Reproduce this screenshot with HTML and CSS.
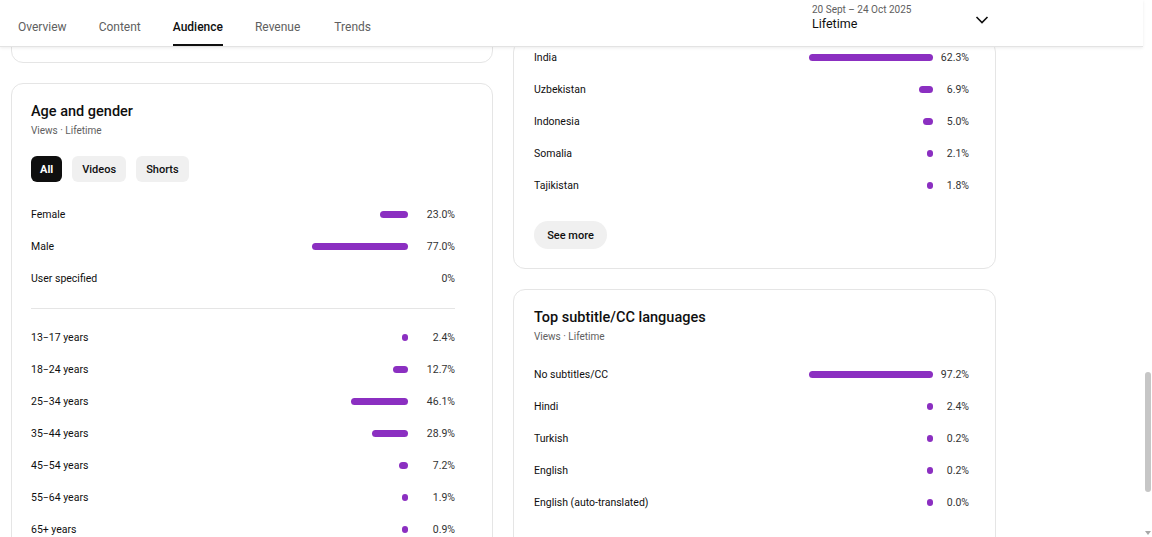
FILE: index.html
```html
<!DOCTYPE html>
<html lang="en">
<head>
<meta charset="utf-8">
<title>Audience</title>
<link rel="stylesheet" href="styles.css">
</head>
<body>
<div class="app">
  <div class="main">
    <header class="topbar">
      <nav class="tabs">
        <a class="tab">Overview</a>
        <a class="tab">Content</a>
        <a class="tab active">Audience</a>
        <a class="tab">Revenue</a>
        <a class="tab">Trends</a>
      </nav>
      <div class="picker">
        <div class="picker-text">
          <div class="picker-range">20 Sept – 24 Oct 2025</div>
          <div class="picker-value">Lifetime</div>
        </div>
        <svg class="chevron" width="14" height="10" viewBox="0 0 14 10"><path d="M1.5 2 L7 7.5 L12.5 2" fill="none" stroke="#0f0f0f" stroke-width="1.6"/></svg>
      </div>
    </header>
    <div class="content">
      <div class="col col-left">
        <section class="card card-stub"></section>
        <section class="card card-age">
          <h2 class="card-title">Age and gender</h2>
          <div class="card-sub">Views · Lifetime</div>
          <div class="chips">
            <span class="chip selected">All</span>
            <span class="chip">Videos</span>
            <span class="chip">Shorts</span>
          </div>
          <div class="rows rows-gender">
            <div class="row"><span class="label">Female</span><span class="bar-wrap"><span class="bar" style="width:28px"></span></span><span class="pct">23.0%</span></div>
            <div class="row"><span class="label">Male</span><span class="bar-wrap"><span class="bar" style="width:96px"></span></span><span class="pct">77.0%</span></div>
            <div class="row"><span class="label">User specified</span><span class="bar-wrap"></span><span class="pct">0%</span></div>
          </div>
          <hr class="divider">
          <div class="rows rows-age">
            <div class="row"><span class="label">13−17 years</span><span class="bar-wrap"><span class="bar" style="width:6px"></span></span><span class="pct">2.4%</span></div>
            <div class="row"><span class="label">18−24 years</span><span class="bar-wrap"><span class="bar" style="width:15px"></span></span><span class="pct">12.7%</span></div>
            <div class="row"><span class="label">25−34 years</span><span class="bar-wrap"><span class="bar" style="width:57px"></span></span><span class="pct">46.1%</span></div>
            <div class="row"><span class="label">35−44 years</span><span class="bar-wrap"><span class="bar" style="width:36px"></span></span><span class="pct">28.9%</span></div>
            <div class="row"><span class="label">45−54 years</span><span class="bar-wrap"><span class="bar" style="width:9px"></span></span><span class="pct">7.2%</span></div>
            <div class="row"><span class="label">55−64 years</span><span class="bar-wrap"><span class="bar" style="width:6px"></span></span><span class="pct">1.9%</span></div>
            <div class="row"><span class="label">65+ years</span><span class="bar-wrap"><span class="bar" style="width:6px"></span></span><span class="pct">0.9%</span></div>
          </div>
        </section>
      </div>
      <div class="col col-right">
        <section class="card card-geo">
          <div class="rows wide">
            <div class="row"><span class="label">India</span><span class="bar-wrap"><span class="bar" style="width:124px"></span></span><span class="pct">62.3%</span></div>
            <div class="row"><span class="label">Uzbekistan</span><span class="bar-wrap"><span class="bar" style="width:14px"></span></span><span class="pct">6.9%</span></div>
            <div class="row"><span class="label">Indonesia</span><span class="bar-wrap"><span class="bar" style="width:10px"></span></span><span class="pct">5.0%</span></div>
            <div class="row"><span class="label">Somalia</span><span class="bar-wrap"><span class="bar" style="width:6px"></span></span><span class="pct">2.1%</span></div>
            <div class="row"><span class="label">Tajikistan</span><span class="bar-wrap"><span class="bar" style="width:6px"></span></span><span class="pct">1.8%</span></div>
          </div>
          <button class="see-more">See more</button>
        </section>
        <section class="card card-cc">
          <h2 class="card-title">Top subtitle/CC languages</h2>
          <div class="card-sub">Views · Lifetime</div>
          <div class="rows wide rows-cc">
            <div class="row"><span class="label">No subtitles/CC</span><span class="bar-wrap"><span class="bar" style="width:124px"></span></span><span class="pct">97.2%</span></div>
            <div class="row"><span class="label">Hindi</span><span class="bar-wrap"><span class="bar" style="width:6px"></span></span><span class="pct">2.4%</span></div>
            <div class="row"><span class="label">Turkish</span><span class="bar-wrap"><span class="bar" style="width:6px"></span></span><span class="pct">0.2%</span></div>
            <div class="row"><span class="label">English</span><span class="bar-wrap"><span class="bar" style="width:6px"></span></span><span class="pct">0.2%</span></div>
            <div class="row"><span class="label">English (auto-translated)</span><span class="bar-wrap"><span class="bar" style="width:6px"></span></span><span class="pct">0.0%</span></div>
          </div>
        </section>
      </div>
    </div>
  </div>
  <div class="scrollbar">
    <div class="thumb"></div>
    <div class="arrow-down"></div>
  </div>
</div>
</body>
</html>
```
FILE: styles.css
```css
* { box-sizing: border-box; }
html, body { margin: 0; padding: 0; height: 100%; overflow: hidden; background: #fff; }
body { font-family: Roboto, "Liberation Sans", Arial, sans-serif; color: #0f0f0f; }

.app { display: flex; width: 1152px; height: 537px; }
.main { width: 1143px; height: 537px; display: flex; flex-direction: column; position: relative; }

.topbar {
  height: 47px; flex: none; display: flex; align-items: stretch;
  padding: 0 153px 0 18px; background: #fff;
  border-bottom: 1px solid #e3e3e3;
  box-shadow: 0 1px 3px rgba(0,0,0,0.08);
  position: relative; z-index: 2;
}
.tabs { display: flex; gap: 32px; }
.tab {
  display: flex; align-items: center; font-size: 12px; color: #606060;
  padding-top: 10px; border-bottom: 2.5px solid transparent; font-weight: 400;
}
.tab:nth-child(4) { margin-right: 2px; }
.tab.active { color: #0f0f0f; border-bottom-color: #0f0f0f; font-weight: 500; }

.picker { margin-left: auto; width: 178px; display: flex; justify-content: space-between; align-items: flex-start; padding-top: 3px; }
.picker-range { font-size: 10px; color: #606060; line-height: 13px; }
.picker-value { font-size: 12.5px; color: #0f0f0f; line-height: 16px; margin-top: 0; }
.chevron { margin-top: 12px; margin-right: 1px; }

.content { flex: 1; overflow: hidden; display: flex; gap: 20px; padding-left: 11px; }
.col { width: 482px; flex: none; display: flex; flex-direction: column; }
.col-right { width: 483px; }

.card { border: 1px solid #e5e5e5; border-radius: 12px; background: #fff; flex: none; }
.card-stub { height: 100px; margin-top: -84px; }
.card-age { margin-top: 20px; padding: 18px 37px 0 19px; height: 520px; }

.card-title { margin: 0; font-size: 14.5px; font-weight: 500; line-height: 20px; color: #0f0f0f; }
.card-sub { font-size: 10px; color: #606060; line-height: 14px; margin-top: 2px; }

.chips { display: flex; gap: 10px; margin-top: 18px; }
.chip {
  height: 26px; padding: 0 10px; border-radius: 6px; background: #f0f0f0;
  font-size: 11px; font-weight: 500; display: flex; align-items: center; color: #0f0f0f;
}
.chip.selected { background: #0f0f0f; color: #fff; font-weight: 700; padding: 0 9px; }

.rows { display: flex; flex-direction: column; }
.rows-gender { margin-top: 16px; }
.row { height: 32px; display: flex; align-items: center; font-size: 10.5px; }
.label { flex: 1; color: #0f0f0f; }
.bar-wrap { width: 130px; display: flex; justify-content: flex-end; }
.bar { height: 7px; border-radius: 4px; background: #8b2fc1; display: block; }
.pct { width: 47px; text-align: right; color: #333; }
.wide .pct { width: 36px; }

.divider { border: none; border-top: 1px solid #e5e5e5; margin: 14px 0 12px; height: 0; }

.card-geo { margin-top: -7px; padding: 0 26px 19px 20px; }
.see-more {
  margin-top: 20px; height: 28px; width: 73px; border: none; border-radius: 14px;
  background: #f0f0f0; font-family: inherit; font-size: 11px; font-weight: 500; color: #0f0f0f;
  padding: 0; cursor: pointer;
}
.card-cc { margin-top: 20px; padding: 18px 26px 20px 20px; height: 300px; }
.rows-cc { margin-top: 14px; }

.scrollbar { width: 9px; height: 537px; position: relative; background: #fff; }
.thumb { position: absolute; left: 2px; top: 372px; width: 6px; height: 120px; border-radius: 3px; background: #c6c6c6; }
.arrow-down {
  position: absolute; left: 2px; top: 531px; width: 0; height: 0;
  border-left: 3px solid transparent; border-right: 3px solid transparent; border-top: 4px solid #a8a8a8;
}
```
